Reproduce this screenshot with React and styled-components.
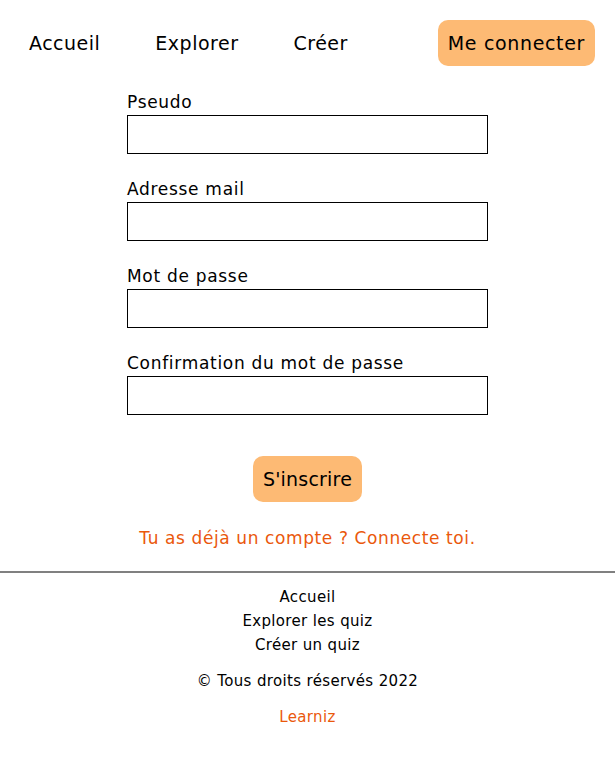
import React from 'react'
import styled, { createGlobalStyle } from 'styled-components'

const GlobalStyle = createGlobalStyle`
  body {
    margin: 0;
    background: #fff;
    font-family: "DejaVu Sans", "Open Sans", sans-serif;
    color: #000;
  }
`

const Nav = styled.nav`
  display: flex;
  align-items: center;
  padding: 20px 20px 0 29px;
`

const NavLinks = styled.div`
  display: flex;
  align-items: center;
  gap: 55px;
`

const NavLink = styled.a`
  font-size: 19px;
  letter-spacing: 0.5px;
  color: #000;
  text-decoration: none;
  cursor: pointer;
`

const OrangeButton = styled.button`
  background: #fdba74;
  border: none;
  border-radius: 10px;
  height: 46px;
  padding: 0 10px;
  font-family: inherit;
  font-size: 19px;
  letter-spacing: ${(p) => (p.$right ? '0.65px' : '0.2px')};
  color: #000;
  cursor: pointer;
  margin-left: ${(p) => (p.$right ? 'auto' : '0')};
`

const Form = styled.form`
  width: 361px;
  margin: 24px auto 0;
  display: flex;
  flex-direction: column;
  gap: 23px;
`

const Field = styled.div`
  display: flex;
  flex-direction: column;
`

const Label = styled.label`
  font-size: 17px;
  line-height: 24px;
  letter-spacing: 0.7px;
  margin-bottom: 1px;
`

const Input = styled.input`
  box-sizing: border-box;
  height: 39px;
  width: 100%;
  border: 1.5px solid #000;
  border-radius: 0;
  padding: 0 8px;
  font-family: inherit;
  font-size: 16px;
`

const Actions = styled.div`
  display: flex;
  flex-direction: column;
  align-items: center;
  margin-top: 41px;
`

const LoginLink = styled.a`
  display: block;
  margin-top: 24px;
  font-size: 17px;
  line-height: 24px;
  letter-spacing: 0.6px;
  color: #ea580c;
  text-align: center;
  cursor: pointer;
`

const Footer = styled.footer`
  margin-top: 21px;
  border-top: 2px solid #808080;
  padding-top: 12px;
  display: flex;
  flex-direction: column;
  align-items: center;
  font-size: 15px;
  line-height: 24px;
  letter-spacing: 0.35px;
`

const FooterLink = styled.a`
  color: #000;
  text-decoration: none;
`

const FooterText = styled.p`
  margin: 12px 0 0;
  color: ${(p) => p.$color || '#000'};
`

const fields = [
  { id: 'pseudo', label: 'Pseudo', type: 'text' },
  { id: 'mail', label: 'Adresse mail', type: 'email' },
  { id: 'password', label: 'Mot de passe', type: 'password' },
  { id: 'confirm', label: 'Confirmation du mot de passe', type: 'password' },
]

export default function App() {
  return (
    <>
      <GlobalStyle />
      <Nav>
        <NavLinks>
          <NavLink>Accueil</NavLink>
          <NavLink>Explorer</NavLink>
          <NavLink>Créer</NavLink>
        </NavLinks>
        <OrangeButton $right>Me connecter</OrangeButton>
      </Nav>

      <Form onSubmit={(e) => e.preventDefault()}>
        {fields.map((f) => (
          <Field key={f.id}>
            <Label htmlFor={f.id}>{f.label}</Label>
            <Input id={f.id} type={f.type} />
          </Field>
        ))}
      </Form>

      <Actions>
        <OrangeButton type="submit">S'inscrire</OrangeButton>
        <LoginLink>Tu as déjà un compte ? Connecte toi.</LoginLink>
      </Actions>

      <Footer>
        <FooterLink>Accueil</FooterLink>
        <FooterLink>Explorer les quiz</FooterLink>
        <FooterLink>Créer un quiz</FooterLink>
        <FooterText>© Tous droits réservés 2022</FooterText>
        <FooterText $color="#ea580c">Learniz</FooterText>
      </Footer>
    </>
  )
}
